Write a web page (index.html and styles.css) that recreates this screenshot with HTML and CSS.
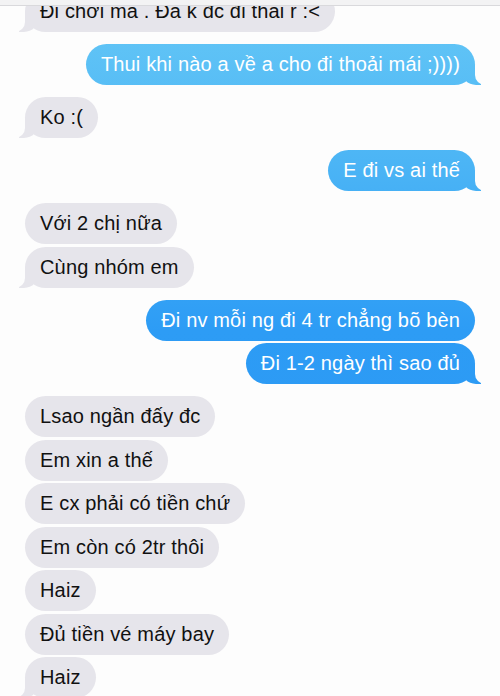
FILE: index.html
```html
<!DOCTYPE html>
<html lang="vi">
<head>
  <meta charset="UTF-8">
  <meta name="viewport" content="width=device-width, initial-scale=1.0">
  <title>Tin nhắn</title>
  <link rel="stylesheet" href="styles.css">
</head>
<body>
  <div class="topbar"></div>

  <div class="chat">
    <div class="group them">
      <div class="bubble tail">Đi chơi mà . Đa k đc đi thai r :&lt;</div>
    </div>

    <div class="group me">
      <div class="bubble tail">Thui khi nào a về a cho đi thoải mái ;))))</div>
    </div>

    <div class="group them">
      <div class="bubble tail">Ko :(</div>
    </div>

    <div class="group me">
      <div class="bubble tail">E đi vs ai thế</div>
    </div>

    <div class="group them">
      <div class="bubble">Với 2 chị nữa</div>
      <div class="bubble tail">Cùng nhóm em</div>
    </div>

    <div class="group me">
      <div class="bubble">Đi nv mỗi ng đi 4 tr chẳng bõ bèn</div>
      <div class="bubble tail">Đi 1-2 ngày thì sao đủ</div>
    </div>

    <div class="group them">
      <div class="bubble">Lsao ngần đấy đc</div>
      <div class="bubble">Em xin a thế</div>
      <div class="bubble">E cx phải có tiền chứ</div>
      <div class="bubble">Em còn có 2tr thôi</div>
      <div class="bubble">Haiz</div>
      <div class="bubble">Đủ tiền vé máy bay</div>
      <div class="bubble tail">Haiz</div>
    </div>
  </div>
</body>
</html>
```

FILE: styles.css
```css
body {
  margin: 0;
  background-color: #fdfdfd;
  font-family: 'Liberation Sans', Arial, sans-serif;
  overflow: hidden;
}
.topbar {
  position: relative;
  z-index: 5;
  height: 5px;
  background-color: #f3f3f4;
  border-bottom: 1px solid #d9d9dc;
}
.chat {
  margin-top: -15px;
  padding: 0 25px;
  display: flex;
  flex-direction: column;
  gap: 12px;
}
.group {
  display: flex;
  flex-direction: column;
  gap: 2.5px;
}
.them {
  align-items: flex-start;
}
.me {
  align-items: flex-end;
}
.bubble {
  position: relative;
  padding: 10px 15px;
  font-size: 20px;
  line-height: 21px;
  letter-spacing: 0.16px;
  border-radius: 21px;
  white-space: nowrap;
}
.them .bubble {
  background-color: #e6e5eb;
  color: #111111;
}
.me .bubble {
  color: #ffffff;
  background: linear-gradient(to bottom, #66c8f6 0, #4cb5f5 160px, #2d9cf5 330px, #2a94f2 696px) fixed;
}

/* the little tails */
.tail::before,
.tail::after {
  content: "";
  position: absolute;
  bottom: 0;
  height: 20px;
}
.them .tail::before {
  left: -6px;
  width: 20px;
  background-color: #e6e5eb;
  border-bottom-right-radius: 15px;
}
.them .tail::after {
  left: -10px;
  width: 10px;
  background-color: #fdfdfd;
  border-bottom-right-radius: 10px;
}
.me .tail::before {
  right: -6px;
  width: 20px;
  background: linear-gradient(to bottom, #66c8f6 0, #4cb5f5 160px, #2d9cf5 330px, #2a94f2 696px) fixed;
  border-bottom-left-radius: 15px;
}
.me .tail::after {
  right: -10px;
  width: 10px;
  background-color: #fdfdfd;
  border-bottom-left-radius: 10px;
}
```
